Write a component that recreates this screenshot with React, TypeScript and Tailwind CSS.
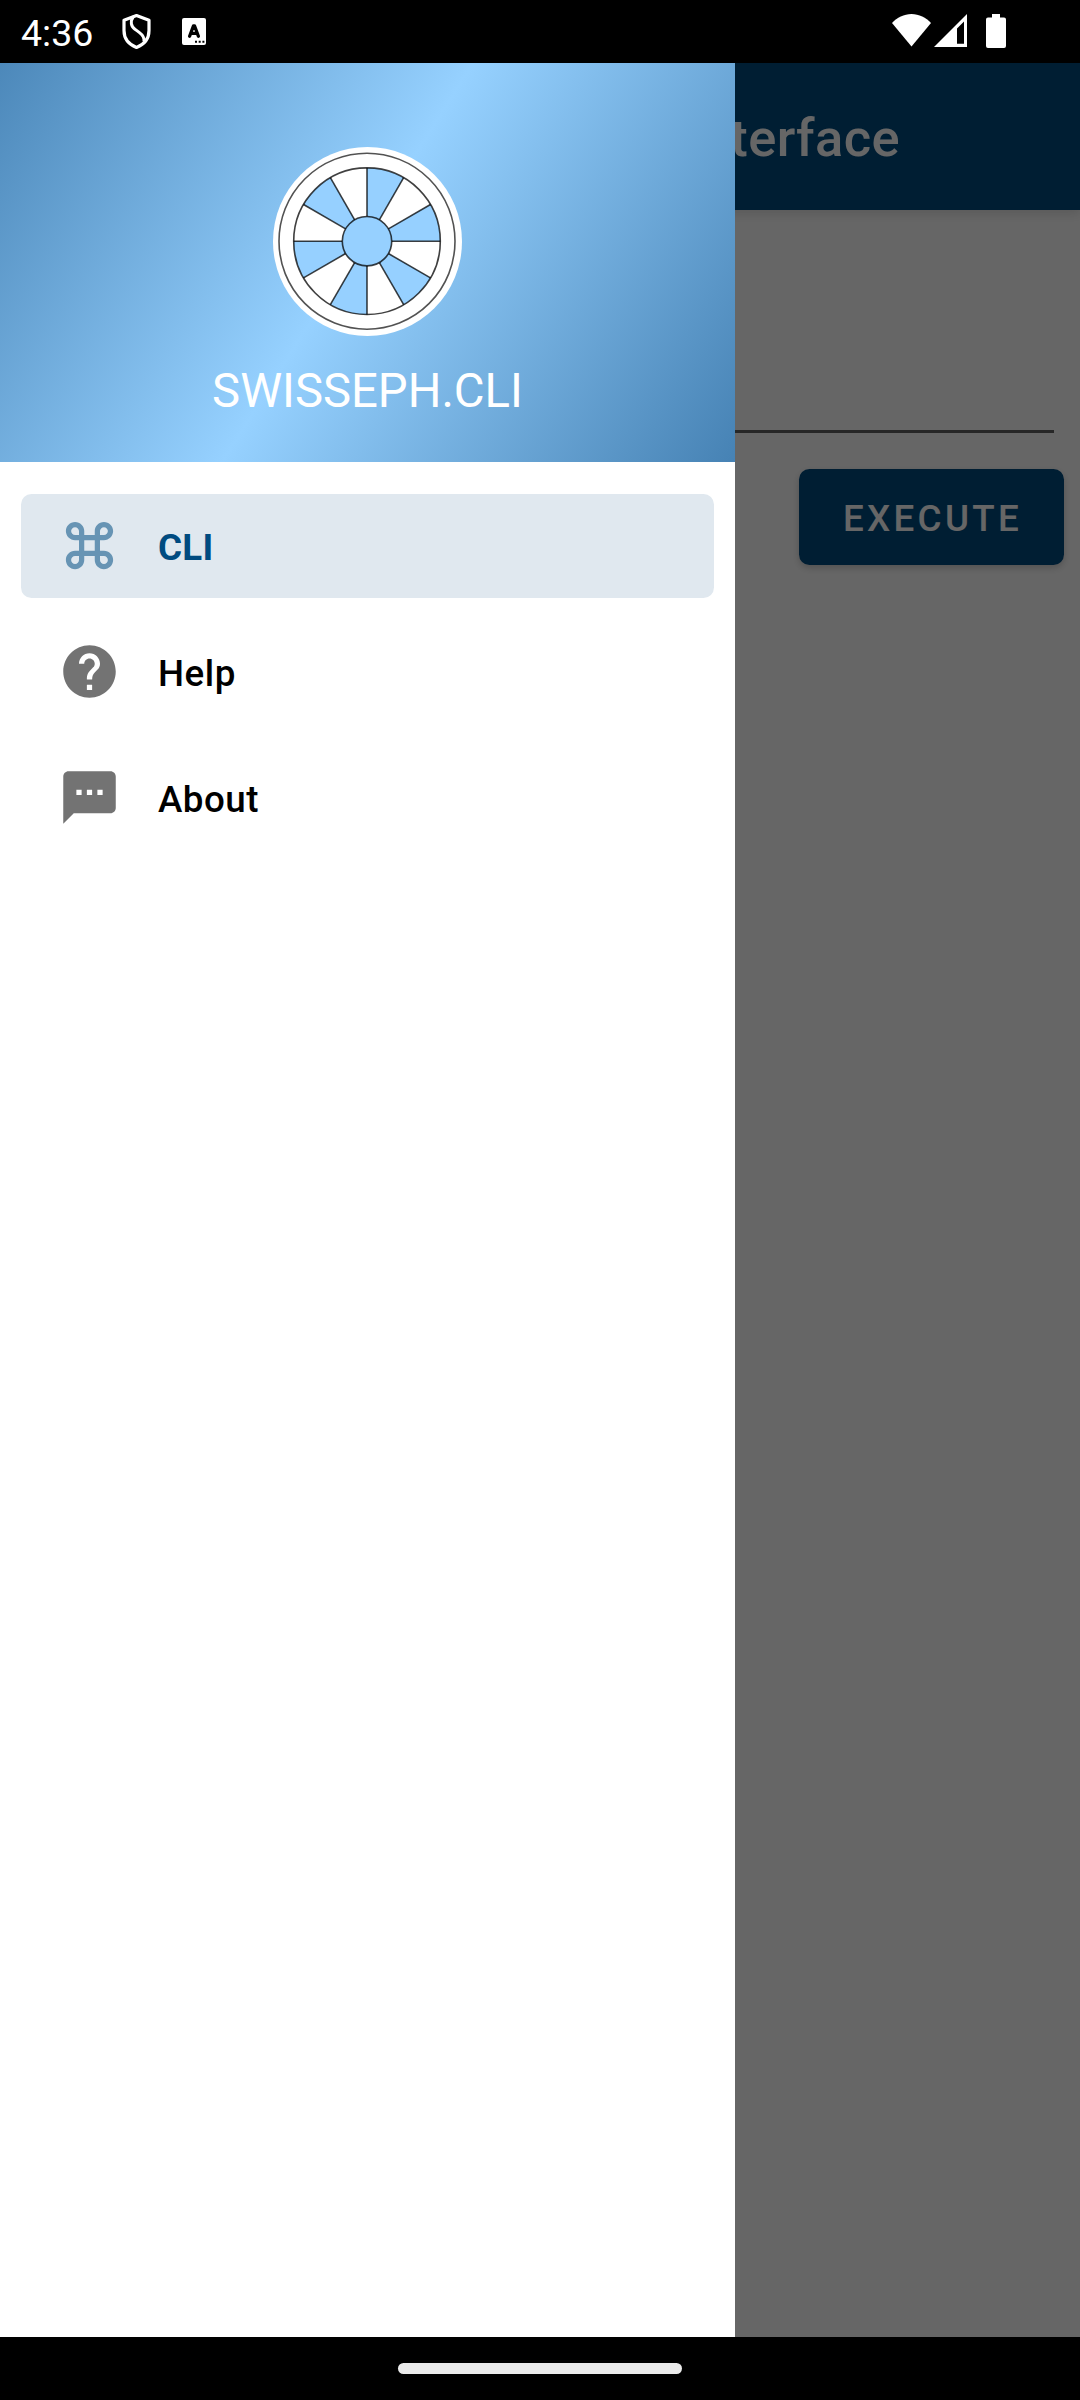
import React from "react";

const COMMAND_PATH =
  "M17.5,3C15.57,3,14,4.57,14,6.5V8h-4V6.5C10,4.57,8.43,3,6.5,3S3,4.57,3,6.5S4.57,10,6.5,10H8v4H6.5C4.57,14,3,15.57,3,17.5S4.57,21,6.5,21s3.5-1.57,3.5-3.5V16h4v1.5c0,1.93,1.57,3.5,3.5,3.5s3.5-1.57,3.5-3.5S19.43,14,17.5,14H16v-4h1.5c1.93,0,3.5-1.57,3.5-3.5S19.43,3,17.5,3z M16,8V6.5C16,5.67,16.67,5,17.5,5S19,5.67,19,6.5S18.33,8,17.5,8H16z M6.5,8C5.67,8,5,7.33,5,6.5S5.67,5,6.5,5S8,5.67,8,6.5V8H6.5z M10,14v-4h4v4H10z M17.5,19c-0.83,0-1.5-0.67-1.5-1.5V16h1.5c0.83,0,1.5,0.67,1.5,1.5S18.33,19,17.5,19z M6.5,19C5.67,19,5,18.33,5,17.5S5.67,16,6.5,16H8v1.5C8,18.33,7.33,19,6.5,19z";
const HELP_PATH =
  "M12 2C6.48 2 2 6.48 2 12s4.48 10 10 10 10-4.48 10-10S17.52 2 12 2zm1 17h-2v-2h2v2zm2.07-7.75l-.9.92C13.45 12.9 13 13.5 13 15h-2v-.5c0-1.1.45-2.1 1.17-2.83l1.24-1.26c.37-.36.59-.86.59-1.41 0-1.1-.9-2-2-2s-2 .9-2 2H8c0-2.21 1.79-4 4-4s4 1.79 4 4c0 .88-.36 1.68-.93 2.25z";
const SMS_PATH =
  "M20 2H4c-1.1 0-1.99.9-1.99 2L2 22l4-4h14c1.1 0 2-.9 2-2V4c0-1.1-.9-2-2-2zM9 11H7V9h2v2zm4 0h-2V9h2v2zm4 0h-2V9h2v2z";

function StatusBar() {
  return (
    <header className="relative z-10 flex h-[63px] w-full shrink-0 items-start justify-between bg-black text-white">
      <div className="flex items-start">
        <span className="ml-[21px] mt-[11px] w-[72px] whitespace-nowrap text-[37.5px] leading-[44px]">4:36</span>
        <svg className="ml-[28px] mt-[13px] h-[37px] w-[31px]" viewBox="0 0 31 37" fill="none" stroke="#fff" strokeWidth="3.2" strokeLinejoin="round">
          <path d="M15.5 2.6 L28 7.2 V17.5 C28 25.5 23 31.5 15.5 34.4 C8 31.5 3 25.5 3 17.5 V7.2 Z" />
          <path d="M12.4 3.5 C8.8 8.5 10 13.5 14.2 16.4 L18.5 19.6 C22.5 22.5 23.4 25 23 28.5" strokeWidth="3" />
        </svg>
        <svg className="ml-[30px] mt-[18px] h-[27px] w-[24px]" viewBox="0 0 24 27">
          <rect width="24" height="27" rx="2" fill="#fff" />
          <path d="M7.6 18.3 L11.4 8 H12.6 L16.4 18.3 M9 15.4 H15" fill="none" stroke="#000" strokeWidth="3.3" strokeLinecap="round" strokeLinejoin="round" />
          <path d="M13 22.8h2v2h-2z M16.7 22.8h2v2h-2z M20.4 22.8h2v2h-2z" fill="#000" />
        </svg>
      </div>
      <div className="mr-[74px] mt-[14px] flex items-start">
        <svg className="h-[33px] w-[39px]" viewBox="0 0 39 33" fill="#fff">
          <path d="M19.5 32.5 L0 9 C5 3.5 12 0 19.5 0 S34 3.5 39 9 Z" />
        </svg>
        <svg className="ml-[3px] h-[33px] w-[33px]" viewBox="0 0 33 33" fill="#fff">
          <path fillRule="evenodd" d="M33 0 V33 H0 Z M23 14.5 V29.7 H30 V7.5 Z" />
        </svg>
        <svg className="ml-[19px] h-[34px] w-[20px]" viewBox="0 0 20 34" fill="#fff">
          <path d="M6 0 H14 V3.4 H18 Q20 3.4 20 5.4 V32 Q20 34 18 34 H2 Q0 34 0 32 V5.4 Q0 3.4 2 3.4 H6 Z" />
        </svg>
      </div>
    </header>
  );
}

/* Point on a circle around the wheel's centre; index counts 30° steps clockwise from the top. */
function at(r: number, index: number) {
  const a = (index * Math.PI) / 6;
  return `${(94 + r * Math.sin(a)).toFixed(2)} ${(94.2 - r * Math.cos(a)).toFixed(2)}`;
}

function Wheel() {
  const steps = Array.from({ length: 12 }, (_, i) => i);
  const filled = [0, 2, 4, 6, 8, 10];
  return (
    <svg className="h-[189px] w-[189px]" viewBox="0 0 189 189">
      <circle cx="94.5" cy="94.5" r="94.5" fill="#fff" />
      {filled.map((i) => (
        <path key={i} fill="#96d0ff" d={`M${at(24.7, i)} L${at(73.3, i)} A73.3 73.3 0 0 1 ${at(73.3, i + 1)} L${at(24.7, i + 1)} Z`} />
      ))}
      <g fill="none" stroke="#000" strokeOpacity="0.75" strokeWidth="1.6">
        {steps.map((i) => (
          <path key={i} d={`M${at(24.7, i)} L${at(73.3, i)}`} />
        ))}
        <circle cx="94" cy="94.2" r="88" strokeOpacity="0.68" />
        <circle cx="94" cy="94.2" r="73.3" />
        <circle cx="94" cy="94.2" r="24.7" fill="#96d0ff" />
      </g>
    </svg>
  );
}

function NavItem({ label, path, active = false }: { label: string; path: string; active?: boolean }) {
  return (
    <li
      className={
        active
          ? "flex h-[104px] items-center rounded-[10.5px] bg-[#e0e8ef] pl-[37px] text-[#004b80]"
          : "flex h-[104px] items-center rounded-[10.5px] pl-[37px] text-black"
      }
    >
      <svg className={active ? "mb-px h-[63px] w-[63px] fill-[#6794b4]" : "mb-[2px] h-[63px] w-[63px] fill-[#737373]"} viewBox="0 0 24 24">
        <path d={path} fillRule="evenodd" />
      </svg>
      <span className={active ? "ml-[37px] mt-[3px] text-[36.75px] font-bold leading-[44px] tracking-[0.26px]" : "ml-[37px] mt-[3px] text-[36.75px] font-medium leading-[44px] tracking-[0.5px]"}>
        {label}
      </span>
    </li>
  );
}

function Drawer() {
  return (
    <aside className="absolute inset-y-0 left-0 flex w-[735px] flex-col bg-white">
      <div className="flex h-[399px] shrink-0 flex-col items-center bg-[linear-gradient(122.15deg,#4682b4,#96d1ff_50%,#4682b4)] bg-[length:735px_462px] bg-[position:0_-63px] pt-[84px]">
        <Wheel />
        <h2 className="mt-[27px] text-[47.25px] leading-[56px] text-white">SWISSEPH.CLI</h2>
      </div>
      <ul className="flex flex-col gap-[22px] px-[21px] pt-[32px]">
        <NavItem label="CLI" path={COMMAND_PATH} active />
        <NavItem label="Help" path={HELP_PATH} />
        <NavItem label="About" path={SMS_PATH} />
      </ul>
    </aside>
  );
}

function CommandScreen() {
  return (
    <main className="flex h-full flex-col bg-white">
      <div className="flex h-[147px] shrink-0 items-center justify-end bg-[#004b80] pr-[180px] text-white shadow-[0_4px_10px_rgba(0,0,0,0.12)]">
        <h1 className="mt-[3px] whitespace-nowrap text-[52.5px] font-medium leading-[62px] tracking-[0.4px]">Command Line Interface</h1>
      </div>
      <div className="mx-[26px] h-[223px] border-b-[3px] border-[#636363]" />
      <button className="mr-4 mt-[36px] flex h-[96px] w-[265px] items-center justify-center self-end rounded-[10.5px] bg-[#004b80] pl-[2px] pt-[3px] text-[36.75px] font-medium leading-[44px] tracking-[3.28px] text-white shadow-[0_3px_7px_rgba(0,0,0,0.2)]">
        EXECUTE
      </button>
    </main>
  );
}

export default function App() {
  return (
    <div className="flex h-[2400px] w-[1080px] flex-col overflow-hidden bg-black font-[Roboto,sans-serif]">
      <StatusBar />
      <div className="relative h-[2274px] shrink-0 overflow-hidden">
        <CommandScreen />
        <div className="absolute inset-0 bg-black/60" />
        <Drawer />
      </div>
      <footer className="flex h-[63px] shrink-0 justify-center bg-black pt-[26px]">
        <div className="h-[11px] w-[284px] rounded-full bg-[#ebebeb]" />
      </footer>
    </div>
  );
}
